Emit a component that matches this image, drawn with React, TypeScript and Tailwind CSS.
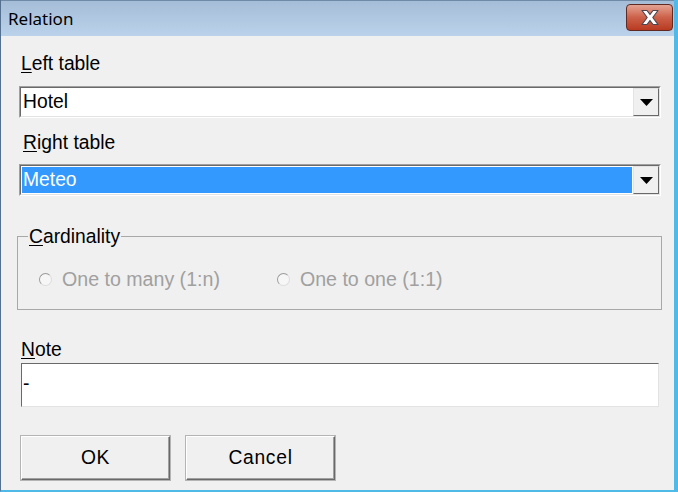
import React from "react"

function Combo({ value, selected }: { value: string; selected?: boolean }) {
  return (
    <div className="ml-[18px] w-[642px] h-[32px] border border-t-[#a0a0a0] border-l-[#a0a0a0] border-b-white border-r-white">
      <div className="h-full flex border border-t-[#696969] border-l-[#696969] border-b-[#e3e3e3] border-r-[#e3e3e3] bg-white">
        <div className="flex-1 flex items-center p-[1px]">
          <div
            className={
              selected
                ? "w-full h-full flex items-center bg-[#3399ff] text-white pl-[1px]"
                : "w-full h-full flex items-center text-black pl-[1px]"
            }
          >
            {value}
          </div>
        </div>
        <div className="w-[26px] h-full flex items-center justify-center bg-[#f0f0f0] border border-t-[#e3e3e3] border-l-[#e3e3e3] border-b-[#696969] border-r-[#696969]">
          <svg width="13" height="7" viewBox="0 0 13 7">
            <path d="M0 0 H13 L6.5 7 Z" fill="#000" />
          </svg>
        </div>
      </div>
    </div>
  )
}

function Radio({ label }: { label: string }) {
  return (
    <div className="flex items-center gap-[10px] text-[#a0a0a0] text-[19.6px]">
      <span className="w-[13px] h-[13px] rounded-full border border-t-[#9a9a9a] border-l-[#9a9a9a] border-b-[#dcdcdc] border-r-[#dcdcdc] bg-[#f6f6f6]" />
      <span>{label}</span>
    </div>
  )
}

export default function App() {
  return (
    <div
      className="w-[678px] h-[492px] flex flex-col bg-[#f0f0f0] border-l border-l-[#55708f] border-r-[4px] border-r-[#4fb9e8] border-b-2 border-b-[#4fb9e8] overflow-hidden text-[19.3px] leading-[22px]"
      style={{ fontFamily: '"Liberation Sans", Arial, sans-serif' }}
    >
      <div className="h-[36px] shrink-0 flex items-center justify-between pl-[7px] pr-[1px] bg-gradient-to-b from-[#a5bdd7] to-[#bad2ea] border-t border-t-[#6f8aa6]">
        <span className="text-[17px] text-black" style={{ fontFamily: '"Noto Sans", sans-serif' }}>
          Relation
        </span>
        <div className="w-[47px] h-[27px] mb-[3px] rounded-[4px] border border-[#5e2a22] bg-gradient-to-b from-[#e3a393] via-[#cc6048] to-[#b83a20] flex items-center justify-center">
          <svg width="22" height="17" viewBox="0 0 22 17">
            <path
              d="M3 1.5 H8 L11 5.5 L14 1.5 H19 L13.8 8.5 L19 15.5 H14 L11 11.5 L8 15.5 H3 L8.2 8.5 Z"
              fill="#fff"
              stroke="#4f4650"
              strokeWidth="1.2"
              strokeLinejoin="round"
            />
          </svg>
        </div>
      </div>

      <div className="flex flex-col">
        <div className="ml-[20px] mt-[17px]">
          <span className="underline underline-offset-2">L</span>eft table
        </div>
        <div className="mt-[11px]">
          <Combo value="Hotel" />
        </div>

        <div className="ml-[22px] mt-[14px]">
          <span className="underline underline-offset-2">R</span>ight table
        </div>
        <div className="mt-[10px]">
          <Combo value="Meteo" selected />
        </div>

        <div className="relative ml-[16px] mt-[40px] w-[645px] h-[74px] border border-[#a8a8a8]">
          <span className="absolute left-[10px] top-[-11px] px-[1px] bg-[#f0f0f0]">
            <span className="underline underline-offset-2">C</span>ardinality
          </span>
          <div className="flex pt-[31px] pl-[21px] gap-[57px]">
            <Radio label="One to many (1:n)" />
            <Radio label="One to one (1:1)" />
          </div>
        </div>

        <div className="ml-[20px] mt-[29px]">
          <span className="underline underline-offset-2">N</span>ote
        </div>
        <div className="ml-[20px] mt-[2px] w-[638px] h-[44px] flex items-center bg-white border border-t-[#696969] border-l-[#696969] border-b-[#e3e3e3] border-r-[#e3e3e3] pl-[1px] pb-[2px]">
          -
        </div>

        <div className="flex ml-[20px] mt-[29px] gap-[16px]">
          <button className="w-[149px] h-[44px] bg-[#f0f0f0] tracking-[0.5px] border border-t-white border-l-white border-b-[#696969] border-r-[#696969] shadow-[inset_-1px_-1px_0_#a0a0a0,0_0_0_1px_#b4b4b4]">
            OK
          </button>
          <button className="w-[149px] h-[44px] bg-[#f0f0f0] tracking-[0.7px] border border-t-white border-l-white border-b-[#696969] border-r-[#696969] shadow-[inset_-1px_-1px_0_#a0a0a0,0_0_0_1px_#b4b4b4]">
            Cancel
          </button>
        </div>
      </div>
    </div>
  )
}
